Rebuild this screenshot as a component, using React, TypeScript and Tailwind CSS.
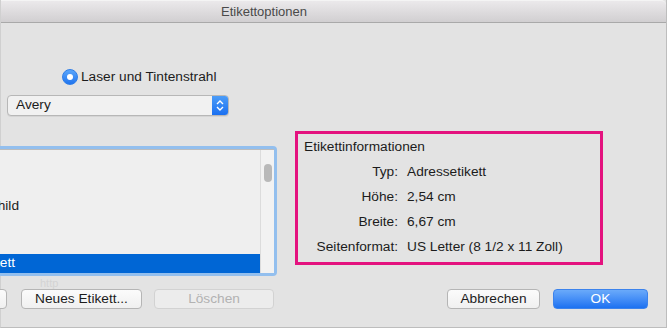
import React from 'react';

const font = { fontFamily: '"Liberation Sans", Arial, sans-serif' };

const rows = [
  { text: '', sel: false, w: 26 },
  { text: '', sel: false, w: 26 },
  { text: 'Namensschild', sel: false, w: 26 },
  { text: '', sel: false, w: 26 },
  { text: '', sel: false, w: 26 },
  { text: 'Adressetikett', sel: true, w: 22 },
];

const App: React.FC = () => {
  return (
    <div className="w-[669px] h-[330px] bg-white overflow-hidden text-[13.7px] text-[#1c1c1c]" style={font}>
      <div className="relative w-[667px] h-[328px] bg-[#e3e3e3] border-r border-b border-[#bdbdbd] border-l border-l-[#d0d0d0] flex flex-col">
        {/* Title bar */}
        <div className="h-[23px] shrink-0 bg-gradient-to-b from-[#ebe9eb] to-[#d1cfd1] border-b border-[#a9a9a9] border-t border-t-[#f4f4f4] flex items-center pl-[220px] rounded-tr-[5px]">
          <span className="text-[13px] text-[#4a4a4a]">Etikettoptionen</span>
        </div>

        {/* Body */}
        <div className="flex flex-col pt-[46px]">
          <div className="flex items-center h-[16px] ml-[61px] gap-[3px]">
            <div className="w-[16px] h-[16px] rounded-full bg-gradient-to-b from-[#5aa6fb] to-[#1f74ee] border border-[#2f7ee8] flex items-center justify-center">
              <div className="w-[6px] h-[6px] rounded-full bg-white" />
            </div>
            <span>Laser und Tintenstrahl</span>
          </div>

          <div className="mt-[10px] ml-[6px] w-[222px] h-[21px] flex rounded-[4px] border border-[#b7b7b7] bg-[#f1f1f1] shadow-[0_1px_0_rgba(0,0,0,0.06)] overflow-hidden">
            <div className="flex-1 flex items-center pl-[8px]">Avery</div>
            <div className="w-[16px] bg-gradient-to-b from-[#4b9cf8] to-[#1a6ff0] flex items-center justify-center">
              <svg width="8" height="13" viewBox="0 0 8 13" fill="none" stroke="white" strokeWidth="1.4">
                <path d="M1 5 L4 2 L7 5" />
                <path d="M1 8 L4 11 L7 8" />
              </svg>
            </div>
          </div>

          <div className="flex items-start">
            {/* List */}
            <div className="mt-[30px] ml-[-11px] w-[287px] h-[130px] p-[3px] rounded-[4px] bg-[#93bfee]">
              <div className="w-full h-full bg-[#efefef] border-t border-[#bcbcbc] flex overflow-hidden">
                <div className="flex-1 flex flex-col pt-[9px]">
                  {rows.map((r, i) => (
                    <div key={i} className={`h-[19px] flex items-center ${r.sel ? 'bg-[#0066d5] text-white' : ''}`}>
                      <div className="flex justify-end whitespace-nowrap" style={{ width: r.w }}>
                        <span className="shrink-0">{r.text}</span>
                      </div>
                    </div>
                  ))}
                </div>
                <div className="w-[14px] border-l border-[#dcdcdc] bg-[#f2f2f2] pt-[14px] flex justify-center">
                  <div className="w-[8px] h-[18px] rounded-full bg-[#b9b9b9]" />
                </div>
              </div>
            </div>

            {/* Info box */}
            <div className="mt-[15px] ml-[18px] w-[308px] h-[134px] border-[3px] border-[#e4137f] pt-[1px]">
              <div className="h-[25px] flex items-center pl-[6px]">Etikettinformationen</div>
              {[
                ['Typ:', 'Adressetikett'],
                ['Höhe:', '2,54 cm'],
                ['Breite:', '6,67 cm'],
                ['Seitenformat:', 'US Letter (8 1/2 x 11 Zoll)'],
              ].map(([k, v]) => (
                <div key={k} className="h-[25px] flex items-center">
                  <span className="w-[100px] text-right">{k}</span>
                  <span className="ml-[9px] whitespace-nowrap">{v}</span>
                </div>
              ))}
            </div>
          </div>

          {/* Buttons */}
          <div className="mt-[13px] flex items-center h-[20px]">
            <div className="ml-[-51px] w-[57px] h-[20px] rounded-[4px] border border-[#b5b5b5] bg-gradient-to-b from-[#fbfbfb] to-[#f0f0f0]" />
            <div className="ml-[14px] w-[121px] h-[20px] rounded-[4px] border border-[#b5b5b5] bg-gradient-to-b from-[#fbfbfb] to-[#f0f0f0] flex items-center justify-center">
              Neues Etikett...
            </div>
            <div className="ml-[12px] w-[120px] h-[20px] rounded-[4px] border border-[#d2d2d2] bg-[#ececec] flex items-center justify-center text-[#b2b2b2]">
              Löschen
            </div>
            <div className="ml-[173px] w-[93px] h-[20px] rounded-[4px] border border-[#b5b5b5] bg-gradient-to-b from-[#fbfbfb] to-[#f0f0f0] flex items-center justify-center">
              Abbrechen
            </div>
            <div className="ml-[13px] w-[95px] h-[20px] rounded-[4px] border border-[#3c83ec] bg-gradient-to-b from-[#6aaafa] to-[#1b71f1] flex items-center justify-center text-white">
              OK
            </div>
          </div>
        </div>

        {/* faint ghost text under the list */}
        <span className="absolute left-[39px] top-[277px] text-[11px] leading-[12px] text-[#d3d3d3]">http</span>
      </div>
    </div>
  );
};

export default App;
